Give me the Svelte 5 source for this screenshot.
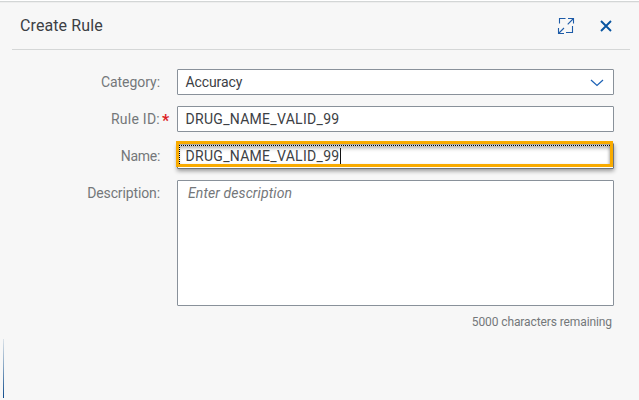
<script>
  const category = 'Accuracy';
  const ruleId = 'DRUG_NAME_VALID_99';
  const name = 'DRUG_NAME_VALID_99';
</script>

<div class="dialog">
  <header>
    <h1>Create Rule</h1>
    <div class="actions">
      <svg width="18" height="18" viewBox="0 0 18 18" fill="none" stroke="#1d5ba8" stroke-width="1.1" aria-label="Expand">
        <path d="M2.5 6.5V1.5H8.5M15.5 9V15.5H9M11 1.5H16.5V6.5M16.5 1.5L10.7 7.3M1.5 11V16.5H7M1.5 16.5L7 11" />
      </svg>
      <svg width="12" height="12" viewBox="0 0 12 12" fill="none" stroke="#0854a0" stroke-width="1.9" aria-label="Close">
        <path d="M1 1L11 11M11 1L1 11" />
      </svg>
    </div>
  </header>

  <div class="form">
    <div class="row">
      <div class="label"><span class="l-cat">Category:</span></div>
      <div class="field select">
        <span class="accuracy">{category}</span>
        <svg width="14" height="8" viewBox="0 0 14 8" fill="none" stroke="#1d62b5" stroke-width="1.25"><path d="M1 1L7 6.5L13 1" /></svg>
      </div>
    </div>
    <div class="row">
      <div class="label required"><span class="l-rule">Rule ID:</span><b>*</b></div>
      <div class="field"><span class="code">{ruleId}</span></div>
    </div>
    <div class="row">
      <div class="label"><span class="l-name">Name:</span></div>
      <div class="field focused"><div class="highlight"></div><span class="code">{name}</span><i class="caret"></i></div>
    </div>
    <div class="row">
      <div class="label"><span class="l-desc">Description:</span></div>
      <div class="field area"><span class="placeholder">Enter description</span></div>
    </div>
    <div class="counter"><span>5000 characters remaining</span></div>
  </div>
  <div class="edge"></div>
</div>

<style>
  :global(body) { background: #f7f7f7; overflow: hidden; }
  .dialog {
    position: relative;
    box-sizing: border-box;
    width: 639px;
    height: 400px;
    background: linear-gradient(#fff 0 1px, #d3d6d6 1px 2px, #eeeeee 2px 3px, #f7f7f7 3px);
    font: 14px/24px Roboto, "Liberation Sans", sans-serif;
    color: #3c4044;
  }
  header {
    box-sizing: border-box;
    height: 50px;
    margin: 0 9px 0 12px;
    padding: 3px 18px 0 8px;
    border-bottom: 1px solid #d5d7d7;
    display: flex;
    align-items: center;
    justify-content: space-between;
  }
  h1 { margin: 0; font-size: 16px; font-weight: 400; letter-spacing: 0.1px; }
  .actions { display: flex; align-items: center; gap: 25px; }
  svg { display: block; flex: none; }
  .form {
    display: flex;
    flex-direction: column;
    gap: 11px;
    padding: 19px 25px 0 0;
  }
  .row { display: flex; }
  .label {
    box-sizing: border-box;
    width: 177px;
    flex: none;
    padding: 1px 17px 0 0;
    color: #74777a;
    text-align: right;
    white-space: nowrap;
  }
  .l-cat { letter-spacing: -0.04px; }
  .l-rule { letter-spacing: 0.25px; }
  .l-name { letter-spacing: -0.3px; }
  .l-desc { letter-spacing: -0.12px; }
  .required { position: relative; }
  .required b {
    position: absolute;
    left: 162px;
    top: 3px;
    color: #dc1c24;
    font-size: 16px;
  }
  .field {
    position: relative;
    box-sizing: border-box;
    flex: 1;
    height: 26px;
    padding: 0 9px 0 7.5px;
    border: 1px solid #89919a;
    border-radius: 1px;
    background: #fff;
    display: flex;
    white-space: nowrap;
  }
  .select { justify-content: space-between; align-items: center; }
  .select svg { margin-top: 1px; }
  .accuracy { letter-spacing: -0.1px; }
  .code { position: relative; letter-spacing: 0.3px; }
  .area { height: 126px; padding-left: 10px; }
  .placeholder { font-style: italic; color: #74777a; letter-spacing: 0.1px; }
  .focused { box-shadow: 0 2px 4px #0006; border-color: #6d747c; }
  .caret { position: relative; width: 1px; height: 16px; margin-top: 4px; background: #111; }
  .highlight {
    position: absolute;
    inset: -3px 0 1px -2px;
    border: 3px solid #f9ab00;
    box-shadow: inset 0 5px 4px -1px #0005, inset -2px 0 3px -1px #0003;
  }
  .highlight::after {
    content: "";
    position: absolute;
    inset: 1px 0 0;
    background:
      repeating-linear-gradient(90deg, #000 0 1px, #ddd 1px 2px) top / 100% 1px no-repeat,
      repeating-linear-gradient(#000 0 1px, #ddd 1px 2px) left / 1px 100% no-repeat;
  }
  .counter {
    margin-top: -5px;
    padding-right: 2px;
    text-align: right;
    font-size: 12px;
    letter-spacing: -0.1px;
    line-height: 20px;
    color: #74777a;
  }
  .edge {
    position: absolute;
    left: 3px;
    top: 339px;
    width: 1px;
    height: 59px;
    background: linear-gradient(#dce3e9, #8aa8c5 45%, #0d4a8c);
  }
</style>
